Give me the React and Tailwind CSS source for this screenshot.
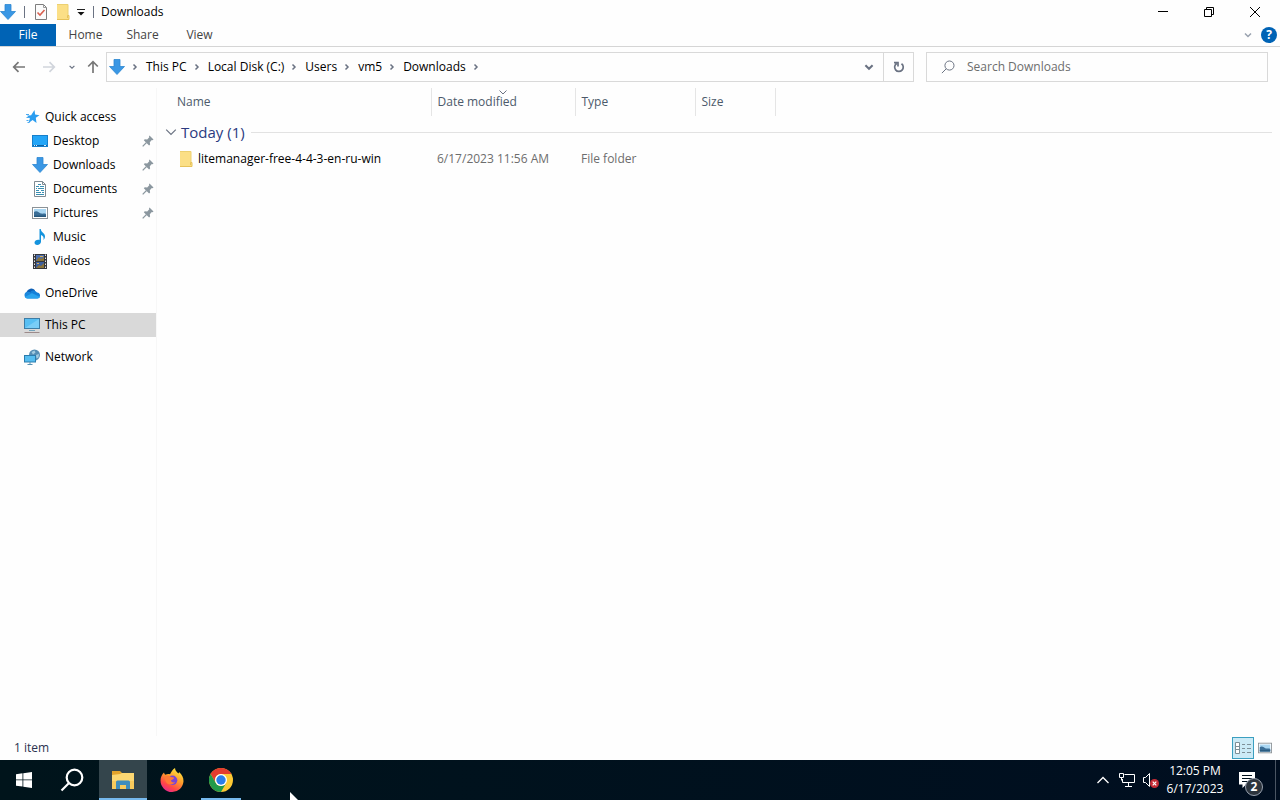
const DownArrowIcon = ({ className }) => (
    <svg className={className} viewBox="0 0 16 16" aria-hidden="true">
        <path d="M5 .5h6v7h4.5L8 15.5.5 7.5H5z" fill="#3a97e4" />
        <path d="M5 .5h6v7h4.5L8 15.5.5 7.5H5z" fill="none" stroke="#2b86d2" strokeWidth=".8" />
    </svg>
);

const FolderIcon = ({ className }) => (
    <svg className={className} viewBox="0 0 16 16" aria-hidden="true">
        <path d="M2 .5h11v11h1v4H2z" fill="#fbdf86" />
        <path d="M2 .5h11v11" fill="none" stroke="#ecd071" />
        <path d="M2 15.5h12v-4h-1.5v2.5" fill="none" stroke="#e6c25a" />
    </svg>
);

const PropertiesIcon = () => (
    <svg className="w-4 h-4" viewBox="0 0 16 16" aria-hidden="true">
        <path d="M2.5.5h8l3 3v12h-11z" fill="#fbfbfb" stroke="#7d7d7d" />
        <path d="M10.5.5v3h3" fill="none" stroke="#9a9a9a" />
        <path d="M4.5 8.5l2.5 2.5 4.5-5" fill="none" stroke="#d9604f" strokeWidth="1.6" />
    </svg>
);

const StarIcon = () => (
    <svg className="w-4 h-4" viewBox="0 0 16 16" aria-hidden="true">
        <path d="M10.5 1l.6 4.6 4.4.6-3.7 2.6.7 5.2-3.9-3-4.3 3.3 1.6-4.8-3-2.7 4.2-.5z" fill="#2a9df0" />
        <path d="M2 5.5h3M2.500 8.500h3M2.500 11.500h2M3.500 13.500h2" stroke="#4aa9ee" />
    </svg>
);

const DesktopIcon = () => (
    <svg className="w-4 h-4" viewBox="0 0 16 16" aria-hidden="true">
        <rect x=".5" y="2.5" width="15" height="11" fill="#23a5f7" stroke="#167fcb" />
        <path d="M1 12.5h14" stroke="#0d62a4" />
        <path d="M2 12.5h1M4 12.5h1M12 12.5h2" stroke="#d7eefe" />
    </svg>
);

const DocumentIcon = () => (
    <svg className="w-4 h-4" viewBox="0 0 16 16" aria-hidden="true">
        <path d="M2.5.5h8l3 3v12h-11z" fill="#fff" stroke="#7f8a92" />
        <path d="M10.5.5v3h3" fill="none" stroke="#7f8a92" />
        <path d="M6 3.5h3M4 5.5h3M8 5.5h4M4 7.5h1M6 7.5h6M4 9.5h3M9 9.5h3M4 11.5h5M10 11.5h2M4 13.5h8" stroke="#3a8fb2" />
    </svg>
);

const PictureIcon = ({ className }) => (
    <svg className={className} viewBox="0 0 16 16" aria-hidden="true">
        <rect x=".5" y="2.5" width="15" height="11" fill="#fff" stroke="#8b9297" />
        <rect x="2" y="4" width="12" height="8" fill="#a9d6f2" />
        <path d="M2 7c3-2 5 1 7 1.500S12 8 14 9v3H2z" fill="#3b6e97" />
        <path d="M2 10.500h12V12H2z" fill="#27587d" />
    </svg>
);

const MusicIcon = () => (
    <svg className="w-4 h-4" viewBox="0 0 16 16" aria-hidden="true">
        <path d="M7.500 0h1.300c.2 3.500 4.200 4 4.200 7.500 0 1.500-.7 2.700-1.600 3.500.8-2.700-.3-4.200-2.400-5v6.800C9 14.700 7.200 16 5.200 16 3.500 16 2.500 15 2.500 13.800c0-1.800 1.900-3 3.600-3 .6 0 1 .1 1.400.2z" fill="#1493dd" />
    </svg>
);

const VideoIcon = () => (
    <svg className="w-4 h-4" viewBox="0 0 16 16" aria-hidden="true">
        <rect x="1" y="1" width="14" height="15" fill="#34363c" />
        <path d="M2.500 1.500v14M13.500 1.500v14" stroke="#e7e7e7" strokeDasharray="1.500 1.500" />
        <rect x="4" y="2" width="8" height="6" fill="#4c6fae" />
        <rect x="4" y="9" width="8" height="6" fill="#3d5f9d" />
        <path d="M4 8l3-4 2 2 3-2v4zM4 15l3-3 2 1 3-3v5z" fill="#8a7339" />
        <path d="M8 3.500h3M5 10.500h2" stroke="#d8ae4f" />
    </svg>
);

const CloudIcon = () => (
    <svg className="w-4 h-4" viewBox="0 0 16 16" aria-hidden="true">
        <path d="M2.500 7A5 5 0 0 1 11 5.200L9 11H3z" fill="#0d5fb5" />
        <path d="M6.500 6.500A4.500 4.500 0 0 1 13 7.500a3 3 0 0 1 3 3.500H9z" fill="#1480d8" />
        <path d="M3.200 6.800c1.500-.2 3 .2 4.300 1L16 11a2.600 2.600 0 0 1-2.600 2.500H3.500A3.400 3.400 0 0 1 3.200 6.800z" fill="#1b87dc" />
        <path d="M.8 12L8 8.200l7.800 3.800a2.700 2.700 0 0 1-2.400 1.500H3.500A3.200 3.200 0 0 1 .8 12z" fill="#2aa4ee" />
    </svg>
);

const ComputerIcon = () => (
    <svg className="w-4 h-4" viewBox="0 0 16 16" aria-hidden="true">
        <rect x=".5" y="1.5" width="15" height="10" fill="#58bff3" stroke="#3d7da6" />
        <path d="M1 11L15 2v9z" fill="#79cdf7" />
        <path d="M5 13.5h6" stroke="#76a4bc" />
        <path d="M.5 15.5h15" stroke="#9c8b8b" />
    </svg>
);

const NetworkIcon = () => (
    <svg className="w-4 h-4" viewBox="0 0 16 16" aria-hidden="true">
        <circle cx="10.500" cy="6" r="5.500" fill="#568db4" />
        <path d="M7.500 3l3-1.500 1 2-2.500 2zM12 6l3-1-.5 3.500-2 1z" fill="#a3cbe0" />
        <rect x=".5" y="6.500" width="11" height="6.500" fill="#56bdf0" stroke="#2b7cae" />
        <path d="M6 13v2M3.500 15.500h5" stroke="#5791b3" />
    </svg>
);

const PinIcon = () => (
    <svg className="w-3 h-3" viewBox="0 0 12 12" aria-hidden="true">
        <path d="M7.500.5l4 4-1 .7-.7-.2-2 2.200.3 2.300-1 1L1.800 5.200l1-1 2.400.3L7.300 2.300 7 1.300z" fill="#8b979f" />
        <path d="M4.500 7.500L.7 11.300" stroke="#8b979f" strokeWidth="1.200" />
    </svg>
);

const Chevron = ({ className, d = 'M2 3.5l3 3 3-3', width = 1.5 }) => (
    <svg className={className} viewBox="0 0 10 10" fill="none" stroke="currentColor" strokeWidth={width} aria-hidden="true">
        <path d={d} />
    </svg>
);

const ArrowIcon = ({ className }) => (
    <svg className={className} viewBox="0 0 14 14" fill="none" stroke="currentColor" strokeWidth="1.7" aria-hidden="true">
        <path d="M13 7H2M6.500 2.200L1.700 7l4.800 4.800" />
    </svg>
);

const MagnifierIcon = ({ className, width }) => (
    <svg className={className} viewBox="0 0 24 24" fill="none" stroke="currentColor" strokeWidth={width} aria-hidden="true">
        <circle cx="14.500" cy="9.500" r="7.800" />
        <path d="M9 15l-7.500 7.500" />
    </svg>
);

const ExplorerIcon = () => (
    <svg className="w-6 h-6" viewBox="0 0 24 24" aria-hidden="true">
        <path d="M1 3h8l2 2h11v5H1z" fill="#e3a32c" />
        <path d="M1 7l8-1 2-1h12v16H1z" fill="#fcd772" />
        <path d="M1 13h22v8H1z" fill="#f8ca5c" />
        <path d="M5 21v-7a1.500 1.500 0 0 1 1.500-1.500h11A1.500 1.500 0 0 1 19 14v7h-4v-4H9v4z" fill="#3f8dbc" />
    </svg>
);

const FirefoxIcon = () => (
    <svg className="w-6 h-6" viewBox="0 0 24 24" aria-hidden="true">
        <defs>
            <linearGradient id="fox" x1=".8" y1=".1" x2=".3" y2="1">
                <stop offset="0" stopColor="#ffe13d" />
                <stop offset=".4" stopColor="#ff9a2b" />
                <stop offset=".75" stopColor="#ff4747" />
                <stop offset="1" stopColor="#e6288c" />
            </linearGradient>
        </defs>
        <path d="M4 4.500c.2 1 .6 1.700 1.200 2.200C7 5.800 9 6 10 6.200 11 4.500 12.500 1.500 15 0c.2 3 2 4 3.500 5.500.4-.5.500-1 .5-1.500 3 2.500 4.500 5.500 4.500 9.200A11.400 11.400 0 0 1 12 24 11.500 11.500 0 0 1 .5 12.500C.5 9 2 6.500 4 4.500z" fill="url(#fox)" />
        <circle cx="12.500" cy="12.300" r="4.800" fill="#7a45d6" />
        <path d="M4.500 9c2-2 5-1.500 6.500 0 1.500.2 3 .3 3 1-.5 1.500-2.500 1.500-3 2.500 0 1.500 2 2.500 4 1.500-1.500 3.500-8 3.500-9.500-1z" fill="#ff7a35" />
    </svg>
);

const ChromeIcon = () => (
    <svg className="w-6 h-6" viewBox="0 0 24 24" aria-hidden="true">
        <circle cx="12" cy="12" r="12" fill="#fcc934" />
        <path d="M1.600 6A12 12 0 0 1 22.400 6H12a6 6 0 0 0-5.200 9z" fill="#e33b2e" />
        <path d="M1.600 6A12 12 0 0 0 12 24l5.200-9A6 6 0 0 1 6.800 15z" fill="#219a4b" />
        <circle cx="12" cy="12" r="6" fill="#fff" />
        <circle cx="12" cy="12" r="4.700" fill="#2a7de9" />
    </svg>
);

const tabs = ['Home', 'Share', 'View'];

const crumbs = ['This PC', 'Local Disk (C:)', 'Users', 'vm5', 'Downloads'];

const quickAccess = [
    { label: 'Desktop', icon: <DesktopIcon />, pinned: true },
    { label: 'Downloads', icon: <DownArrowIcon className="w-4 h-4" />, pinned: true },
    { label: 'Documents', icon: <DocumentIcon />, pinned: true },
    { label: 'Pictures', icon: <PictureIcon className="w-4 h-4" />, pinned: true },
    { label: 'Music', icon: <MusicIcon /> },
    { label: 'Videos', icon: <VideoIcon /> },
];

const TitleBar = () => (
    <header className="flex items-center h-6 pr-0.5">
        <DownArrowIcon className="w-4 h-4" />
        <span className="w-px h-3 mx-2 bg-gray-500" />
        <button aria-label="Properties"><PropertiesIcon /></button>
        <button aria-label="New folder" className="ml-1.5"><FolderIcon className="w-4 h-4" /></button>
        <button aria-label="Customize Quick Access Toolbar" className="ml-1.5">
            <svg className="w-2 h-2" viewBox="0 0 8 8" aria-hidden="true">
                <path d="M0 1.500h8" stroke="#222" />
                <path d="M.5 4h7L4 7.500z" fill="#111" />
            </svg>
        </button>
        <span className="w-px h-3 ml-2 mr-[7px] bg-gray-500" />
        <h1 className="flex-1 text-black">Downloads</h1>
        <button aria-label="Minimize" className="flex justify-center w-[46px]">
            <svg className="w-2.5 h-2.5" viewBox="0 0 10 10" stroke="#000"><path d="M0 4.500h10" /></svg>
        </button>
        <button aria-label="Restore" className="flex justify-center w-[46px]">
            <svg className="w-2.5 h-2.5" viewBox="0 0 10 10" fill="none" stroke="#000">
                <path d="M.5 2.500h7v7h-7zM2.500 2.500v-2h7v7h-2" />
            </svg>
        </button>
        <button aria-label="Close" className="flex justify-center w-[46px]">
            <svg className="w-2.5 h-2.5" viewBox="0 0 10 10" stroke="#000"><path d="M0 0l10 10M10 0L0 10" /></svg>
        </button>
    </header>
);

const Ribbon = () => (
    <nav className="flex items-center border-b border-[#d5d5d5] text-[#444]">
        <button className="w-14 h-[22px] mr-px bg-[#0063b5] text-white">File</button>
        {tabs.map((tab) => (
            <button key={tab} className="w-[57px]">{tab}</button>
        ))}
        <button aria-label="Expand the Ribbon" className="ml-auto text-gray-400">
            <Chevron className="w-2.5 h-2.5" />
        </button>
        <button aria-label="Help" className="flex items-center justify-center w-4 h-4 ml-2 mr-[3px] rounded-full bg-[#0063b5] text-white font-bold">
            ?
        </button>
    </nav>
);

const AddressBar = () => (
    <div className="flex items-center px-3 pt-[5px] pb-1.5">
        <button aria-label="Back" className="text-[#777]"><ArrowIcon className="w-3.5 h-3.5" /></button>
        <button aria-label="Forward" className="ml-4 text-gray-300"><ArrowIcon className="w-3.5 h-3.5 rotate-180" /></button>
        <button aria-label="Recent locations" className="ml-3 text-gray-500"><Chevron className="w-2 h-2" /></button>
        <button aria-label="Up" className="ml-2.5 text-[#777]"><ArrowIcon className="w-3.5 h-3.5 rotate-90" /></button>

        <div className="flex flex-1 h-[30px] ml-1.5 border border-[#d9d9d9]">
            <div className="flex items-center flex-1 pl-0.5">
                <DownArrowIcon className="w-4 h-4" />
                <Chevron className="w-2.5 h-2.5 ml-[5px] text-gray-500" d="M3.500 2.500l2.500 2.500-2.500 2.500" />
                {crumbs.map((crumb) => (
                    <div key={crumb} className="flex items-center text-black">
                        <button className="pl-1.5 pr-[5px]">{crumb}</button>
                        <Chevron className="w-2.5 h-2.5 text-gray-500" d="M3.500 2.500l2.500 2.500-2.500 2.500" />
                    </div>
                ))}
                <button aria-label="Previous locations" className="ml-auto mr-2 text-gray-500">
                    <Chevron className="w-3 h-3" width={1.7} />
                </button>
            </div>
            <button aria-label="Refresh" className="flex items-center justify-center w-[30px] border-l border-[#d9d9d9] text-gray-500">
                <svg className="w-3 h-3" viewBox="0 0 12 12" fill="none" stroke="currentColor" strokeWidth="1.700">
                    <path d="M8.500 2.700A4.300 4.300 0 1 1 3.700 2.500M1 1.700H5V5.500" />
                </svg>
            </button>
        </div>

        <label className="flex items-center w-[342px] h-[30px] ml-3 pl-3.5 border border-[#d9d9d9] text-gray-500">
            <MagnifierIcon className="w-3.5 h-3.5" width={1.7} />
            <input
                type="text"
                aria-label="Search Downloads"
                placeholder="Search Downloads"
                className="flex-1 ml-3 outline-none placeholder:text-[#6d6d6d]"
            />
        </label>
    </div>
);

const Sidebar = () => (
    <nav className="w-[156px] shrink-0 pt-[17px] text-black">
        <a href="#quick-access" className="flex items-center h-6 pl-6 gap-[5px]">
            <StarIcon />
            Quick access
        </a>
        {quickAccess.map(({ label, icon, pinned }) => (
            <a key={label} href={`#${label.toLowerCase()}`} className="flex items-center h-6 pl-8 pr-0.5 gap-[5px]">
                {icon}
                <span className="flex-1">{label}</span>
                {pinned && <PinIcon />}
            </a>
        ))}
        <a href="#onedrive" className="flex items-center h-6 pl-6 mt-2 gap-[5px]">
            <CloudIcon />
            OneDrive
        </a>
        <a href="#this-pc" className="flex items-center h-6 pl-6 mt-2 gap-[5px] bg-[#d9d9d9]">
            <ComputerIcon />
            This PC
        </a>
        <a href="#network" className="flex items-center h-6 pl-6 mt-2 gap-[5px]">
            <NetworkIcon />
            Network
        </a>
    </nav>
);

const FileList = () => (
    <main className="flex-1 px-2 border-l border-[#f7f7f7]">
        <table className="w-full table-fixed text-left">
            <colgroup>
                <col className="w-[266px]" />
                <col className="w-36" />
                <col className="w-[120px]" />
                <col className="w-20" />
                <col />
            </colgroup>
            <thead className="text-[#4c5a6b]">
                <tr className="h-7">
                    <th className="pl-3 font-normal border-r border-[#e5e5e5]">Name</th>
                    <th className="relative pl-1.5 font-normal border-r border-[#e5e5e5]">
                        Date modified
                        <Chevron className="absolute -top-px left-1/2 w-2.5 h-2.5 -translate-x-1/2 text-gray-500" d="M1.500 3.500L5 7l3.500-3.500" width={1} />
                    </th>
                    <th className="pl-1.5 font-normal border-r border-[#e5e5e5]">Type</th>
                    <th className="pl-1.5 font-normal border-r border-[#e5e5e5]">Size</th>
                    <th />
                </tr>
            </thead>
            <tbody>
                <tr className="h-8">
                    <th colSpan={5} className="font-normal">
                        <button className="flex items-center w-full text-[15px] text-[#2b3a80]">
                            <Chevron className="w-3 h-3 mr-1 text-gray-500" d="M1 3l4 4 4-4" width={1} />
                            Today (1)
                            <span className="flex-1 h-px ml-1.5 bg-[#e2e2e2]" />
                        </button>
                    </th>
                </tr>
                <tr className="h-[22px] text-[#6d6d6d]">
                    <td>
                        <span className="flex items-center pl-[13px] gap-1 text-black whitespace-nowrap">
                            <FolderIcon className="w-4 h-4" />
                            litemanager-free-4-4-3-en-ru-win
                        </span>
                    </td>
                    <td className="pl-1.5 whitespace-nowrap">6/17/2023 11:56 AM</td>
                    <td className="pl-1.5">File folder</td>
                    <td />
                    <td />
                </tr>
            </tbody>
        </table>
    </main>
);

const StatusBar = () => (
    <footer className="flex items-center justify-between h-6 pl-3.5 pr-2 text-[#2b3350]">
        <span>1 item</span>
        <div className="flex items-center gap-1">
            <button aria-label="Details view" className="flex items-center justify-center w-[22px] h-[22px] border border-[#3b9fc0] bg-[#cbeaf6]">
                <svg className="w-4 h-4" viewBox="0 0 16 16" fill="none" stroke="#7d8f97">
                    <path d="M.5 2.500h4v11h-4zM.5 6.500h4M.5 9.500h4" fill="#fff" />
                    <path d="M7 4.500h3M12 4.500h4M7 8.500h3M12 8.500h4M7 12.500h3M12 12.500h4" />
                </svg>
            </button>
            <button aria-label="Large icons view"><PictureIcon className="w-3.5 h-3.5" /></button>
        </div>
    </footer>
);

const Taskbar = () => (
    <div className="flex items-stretch h-10 bg-linear-to-r from-[#00141b] to-[#000e20] text-white">
        <button aria-label="Start" className="flex items-center justify-center w-12">
            <svg className="w-4 h-4" viewBox="0 0 16 16" fill="#fff">
                <path d="M0 2.200l6.500-.9v6.200H0zM7.300 1.200L16 0v7.500H7.300zM0 8.300h6.500v6.300L0 13.700zM7.300 8.300H16V16l-8.700-1.200z" />
            </svg>
        </button>
        <button aria-label="Search" className="flex items-center justify-center w-12">
            <MagnifierIcon className="w-6 h-6" width={2.2} />
        </button>
        <button aria-label="File Explorer" className="flex items-center justify-center w-12 ml-[3px] pt-0.5 border-b-2 border-[#76b9ed] bg-[#34454c]">
            <ExplorerIcon />
        </button>
        <button aria-label="Firefox" className="flex items-center justify-center w-12 ml-px">
            <FirefoxIcon />
        </button>
        <button aria-label="Chrome" className="flex items-center justify-center w-10 ml-[5px] pt-0.5 border-b-2 border-[#76b9ed]">
            <ChromeIcon />
        </button>

        <div className="flex items-center ml-auto">
            <button aria-label="Show hidden icons">
                <svg className="w-3 h-3" viewBox="0 0 12 12" fill="none" stroke="#fff" strokeWidth="1.300">
                    <path d="M.5 9L6 3.500 11.500 9" />
                </svg>
            </button>
            <button aria-label="Network" className="ml-2.5">
                <svg className="w-4 h-4" viewBox="0 0 16 16" fill="none" stroke="#fff">
                    <path d="M5.500 2.500h10v8h-12V7M9.500 10.500v4M6 14.500h7" />
                    <path d="M.5 1.500h4v4h-4zM2.500 5.500v3" />
                </svg>
            </button>
            <button aria-label="Volume muted" className="ml-2">
                <svg className="w-4 h-4" viewBox="0 0 16 16" fill="none" stroke="#fff">
                    <path d="M.5 5.500h2l4-4v13l-4-4h-2z" />
                    <circle cx="11.500" cy="11.500" r="4.500" fill="#c42b35" stroke="none" />
                    <path d="M9.700 9.700l3.600 3.600M13.300 9.700l-3.600 3.600" strokeWidth="1.200" />
                </svg>
            </button>
            <button className="w-[72px] leading-[18px] text-center">
                <span className="block">12:05 PM</span>
                <span className="block">6/17/2023</span>
            </button>
            <button aria-label="Notifications" className="relative ml-2 mr-5">
                <svg className="w-4 h-4" viewBox="0 0 16 16" aria-hidden="true">
                    <path d="M0 0h16v12.500H7L3.500 16v-3.500H0z" fill="#fff" />
                    <path d="M3 3.500h10M3 6.500h10M3 9.500h6" stroke="#00101c" />
                </svg>
                <span className="absolute top-1.5 left-1.5 flex items-center justify-center w-[18px] h-[18px] rounded-full border border-gray-400 bg-[#2c343d] text-[12px] font-bold">
                    2
                </span>
            </button>
        </div>
        <button aria-label="Show desktop" className="w-[5px] border-l border-[#4a5563]" />
    </div>
);

export default function App() {
    return (
        <div className="relative flex flex-col min-h-screen bg-[#fefefe] font-['Open_Sans','Noto_Sans',sans-serif] text-[12px] leading-4">
            <TitleBar />
            <Ribbon />
            <AddressBar />
            <div className="flex flex-1">
                <Sidebar />
                <FileList />
            </div>
            <StatusBar />
            <Taskbar />
            {/* Mouse pointer */}
            <svg className="absolute bottom-0 left-[290px] w-2 h-2 pointer-events-none" viewBox="0 0 8 8" aria-hidden="true">
                <path d="M0 0l8 8H0z" fill="#fff" />
            </svg>
        </div>
    );
}
